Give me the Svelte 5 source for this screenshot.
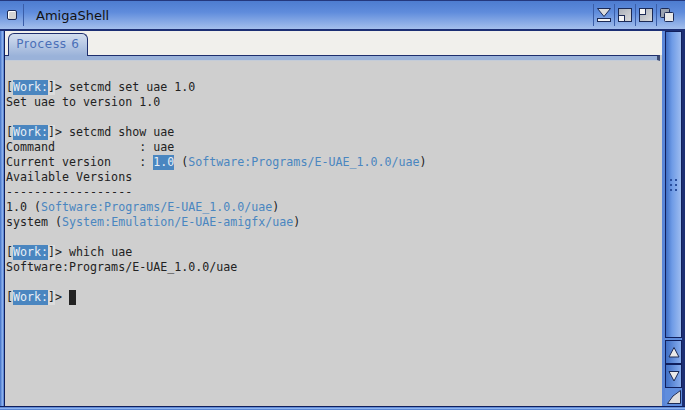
<script>
  const prompt = 'Work:';
</script>

{#snippet work()}[<span class="sel">{prompt}</span><span class="close-bracket">]</span>{/snippet}

<div class="window">
  <header class="titlebar">
    <div class="gadget close"><span class="closebox"></span></div>
    <div class="title">AmigaShell</div>
    <div class="gadget depth">
      <svg width="16" height="16" viewBox="0 0 16 16">
        <path d="M1.500 1.500H14.500L8 9.500Z" fill="#dcdcdc" stroke="#1c2a55" />
        <rect x="1.500" y="11.500" width="13" height="3" fill="#f4f4f4" stroke="#1c2a55" />
      </svg>
    </div>
    <div class="gadget">
      <svg width="16" height="16" viewBox="0 0 16 16">
        <defs>
          <linearGradient id="grey" x1="0" y1="0" x2="1" y2="1">
            <stop offset="0" stop-color="#a8aeb8" />
            <stop offset="1" stop-color="#dcdcdc" />
          </linearGradient>
        </defs>
        <rect x="1.500" y="1.500" width="13" height="13" fill="url(#grey)" stroke="#1c2a55" />
        <rect x="1.500" y="8.500" width="6" height="6" fill="#f4f4f4" stroke="#1c2a55" />
      </svg>
    </div>
    <div class="gadget">
      <svg width="16" height="16" viewBox="0 0 16 16">
        <rect x="1.500" y="1.500" width="13" height="13" fill="url(#grey)" stroke="#1c2a55" />
        <rect x="1.500" y="1.500" width="6" height="6" fill="#f4f4f4" stroke="#1c2a55" />
      </svg>
    </div>
    <div class="gadget last">
      <svg width="16" height="16" viewBox="0 0 16 16">
        <rect x="1.500" y="1.500" width="9" height="9" rx="1" fill="#9aa2b0" stroke="#1c2a55" />
        <rect x="5.500" y="5.500" width="9" height="9" rx="1" fill="#e8e8e8" stroke="#1c2a55" />
      </svg>
    </div>
  </header>

  <div class="middle">
    <div class="leftborder"></div>
    <main class="main">
      <div class="tabs">
        <div class="tab">Process 6</div>
      </div>
      <div class="tabline"></div>
      <pre class="console">

{@render work()}&gt; setcmd set uae 1.0
Set uae to version 1.0

{@render work()}&gt; setcmd show uae
Command            : uae
Current version    : <span class="sel">1.0</span> (<span class="link">Software:Programs/E-UAE_1.0.0/uae</span>)
Available Versions
------------------
1.0 (<span class="link">Software:Programs/E-UAE_1.0.0/uae</span>)
system (<span class="link">System:Emulation/E-UAE-amigfx/uae</span>)

{@render work()}&gt; which uae
Software:Programs/E-UAE_1.0.0/uae

{@render work()}&gt; <span class="cursor"> </span></pre>
    </main>
    <aside class="scrollbar">
      <div class="track">
        <div class="knob">
          <div class="grip">
            {#each Array(6) as _}
              <i></i>
            {/each}
          </div>
        </div>
      </div>
      <button class="arrow" aria-label="up">
        <svg width="14" height="14" viewBox="0 0 14 14"><path d="M7 2.500L12 12H2Z" fill="#eaeaea" stroke="#1c2a55" stroke-linejoin="round" /></svg>
      </button>
      <button class="arrow" aria-label="down">
        <svg width="14" height="14" viewBox="0 0 14 14"><path d="M2 2.500H12L7 12Z" fill="#eaeaea" stroke="#1c2a55" stroke-linejoin="round" /></svg>
      </button>
      <div class="resize">
        <svg width="16" height="16" viewBox="0 0 16 16"><path d="M14.500 1.500V14.500H1.500Q6 6 14.500 1.500Z" fill="#dedede" stroke="#1c2a55" stroke-linejoin="round" /></svg>
      </div>
    </aside>
  </div>
  <div class="bottomborder"></div>
</div>

<style>
  :global(body) {
    margin: 0;
    overflow: hidden;
  }

  .window {
    width: 685px;
    height: 410px;
    display: flex;
    flex-direction: column;
    background: #4a78cc;
  }

  .titlebar {
    height: 31px;
    box-sizing: border-box;
    flex: none;
    display: flex;
    align-items: center;
    border-top: 1px solid #24387e;
    border-bottom: 2px solid #1c2f74;
    background: linear-gradient(#4d7cd0, #5f8cdc 40%, #a4bfec);
    color: #111;
  }

  .gadget {
    width: 21px;
    height: 22px;
    display: flex;
    align-items: center;
    justify-content: center;
    border-left: 1px solid #3a5da8;
    box-sizing: border-box;
  }

  .close {
    width: 24px;
    border-left: 0;
    border-right: 1px solid #3a5da8;
    margin-right: 12px;
    padding-left: 1px;
  }

  .closebox {
    width: 8px;
    height: 8px;
    background: #d4d4d4;
    border: 1px solid #1c2a55;
    border-radius: 2px;
    box-shadow: inset 1px 1px 0 #fff;
  }

  .title {
    flex: 1;
    font: 13px "DejaVu Sans", sans-serif;
  }

  .last {
    margin-right: 8px;
  }

  .middle {
    flex: 1;
    display: flex;
    min-height: 0;
  }

  .leftborder {
    width: 5px;
    flex: none;
    box-sizing: border-box;
    background: linear-gradient(90deg, #3f6fc6, #8fb3ee 60%, #4a78cc);
    border-right: 1px solid #101f5c;
  }

  .main {
    width: 657px;
    flex: none;
    display: flex;
    flex-direction: column;
    background: #cfcfcf;
  }

  .tabs {
    height: 24px;
    flex: none;
    padding-left: 3px;
    display: flex;
    align-items: flex-end;
    background: #f1f0ec;
  }

  .tab {
    position: relative;
    width: 80px;
    height: 23px;
    margin-bottom: -1px;
    box-sizing: border-box;
    border: 1px solid #1e2f6e;
    border-bottom: 0;
    border-radius: 6px 6px 0 0;
    background: linear-gradient(#d3deef, #9ab2d9);
    color: #4a6fb8;
    font: 12px/21px "DejaVu Sans", sans-serif;
    letter-spacing: 0.7px;
    text-align: center;
  }

  .tabline {
    height: 6px;
    flex: none;
    box-sizing: border-box;
    margin-right: 2px;
    border-top: 1px solid #1e2f6e;
    background: #9ab2d9;
    border-right: 3px solid #3c4a72;
    border-bottom: 1px solid #c4ccd8;
  }

  .console {
    flex: 1;
    margin: 0;
    padding: 4px 0 0 1px;
    font: 11.65px/15px "DejaVu Sans Mono", monospace;
    color: #222;
    overflow: hidden;
  }

  .sel {
    display: inline-block;
    background: #4a86c0;
    color: #e8eef5;
  }

  .close-bracket {
    display: inline-block;
    background: #dcdcdc;
  }

  .link {
    color: #4a86c0;
  }

  .cursor {
    display: inline-block;
    width: 7px;
    height: 15px;
    vertical-align: top;
    background: #222;
  }

  .scrollbar {
    width: 23px;
    flex: none;
    box-sizing: border-box;
    display: flex;
    flex-direction: column;
    border-left: 3px solid #5a86d8;
    border-right: 3px solid #1c2f74;
    background: #5f8ddd;
  }

  .track {
    flex: 1;
    min-height: 0;
    display: flex;
    padding-bottom: 2px;
  }

  .knob {
    flex: 1;
    border: 1px solid #101f5c;
    background: linear-gradient(90deg, #3f6fc6, #6e9be6 40%, #9dbcf0);
    display: flex;
    align-items: center;
    justify-content: center;
  }

  .grip {
    display: grid;
    grid-template-columns: 2px 2px;
    gap: 3px;
  }

  .grip i {
    width: 2px;
    height: 2px;
    background: #2a4f9e;
  }

  .arrow {
    height: 24px;
    flex: none;
    padding: 0;
    display: flex;
    align-items: center;
    justify-content: center;
    border: 1px solid #101f5c;
    background: linear-gradient(90deg, #3f6fc6, #86aced);
  }

  .resize {
    height: 18px;
    flex: none;
    display: flex;
    align-items: center;
    justify-content: center;
  }

  .bottomborder {
    height: 4px;
    flex: none;
    box-sizing: border-box;
    border-top: 1px solid #101f5c;
    background: linear-gradient(#4a78cc, #8fb3ee 50%, #3f6fc6);
  }
</style>
